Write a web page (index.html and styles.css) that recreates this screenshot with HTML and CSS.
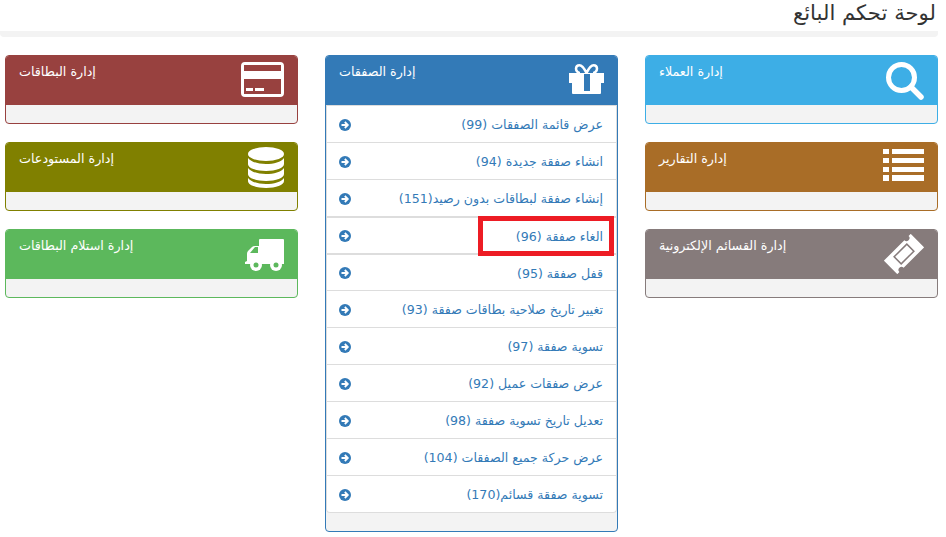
FILE: index.html
```html
<!DOCTYPE html>
<html lang="ar">
<head>
  <meta charset="UTF-8" />
  <title>لوحة تحكم البائع</title>
  <link rel="stylesheet" href="styles.css">
</head>
<body>
  <header class="page-header">
    <h1>لوحة تحكم البائع</h1>
  </header>

  <main class="columns">
    <section class="column">
      <div class="panel panel-cards">
        <div class="panel-heading">
          <span class="panel-title">إدارة البطاقات</span>
          <svg class="panel-icon icon-card" viewBox="0 0 43 35"><path fill="#fff" fill-rule="evenodd" d="M4 0h35a4 4 0 0 1 4 4v27a4 4 0 0 1-4 4H4a4 4 0 0 1-4-4V4a4 4 0 0 1 4-4zM3 3v6h37V3zm0 14v15h37V17z"/><path fill="#fff" d="M5 26h7v3H5zm9 0h9v3h-9z"/></svg>
        </div>
        <div class="panel-footer"></div>
      </div>
      <div class="panel panel-stores">
        <div class="panel-heading">
          <span class="panel-title">إدارة المستودعات</span>
          <svg class="panel-icon icon-stack" viewBox="0 0 36 41"><g fill="#fff"><ellipse cx="18" cy="7" rx="18" ry="7"/><path d="M0 11c3 4 10 6 18 6s15-2 18-6v6c0 4-8 7-18 7S0 21 0 17z"/><path d="M0 21c3 4 10 6 18 6s15-2 18-6v6c0 4-8 7-18 7S0 31 0 27z"/><path d="M0 31c3 4 10 6 18 6s15-2 18-6v3c0 4-8 7-18 7S0 38 0 34z"/></g></svg>
        </div>
        <div class="panel-footer"></div>
      </div>
      <div class="panel panel-receive">
        <div class="panel-heading">
          <span class="panel-title">إدارة استلام البطاقات</span>
          <svg class="panel-icon icon-truck" viewBox="0 0 39 32"><path fill="#fff" fill-rule="evenodd" d="M15 0h23a1 1 0 0 1 1 1v24H0v-2l2-1v-7q0-2 1-3l4-4q1-1 3-1h4V1a1 1 0 0 1 1-1zM5 14h8V8h-3z"/><circle cx="11" cy="26" r="6" fill="#fff"/><circle cx="31" cy="26" r="6" fill="#fff"/><circle cx="11" cy="26" r="2.500" fill="#5cb85c"/><circle cx="31" cy="26" r="2.500" fill="#5cb85c"/></svg>
        </div>
        <div class="panel-footer"></div>
      </div>
    </section>

    <section class="column">
      <div class="panel panel-deals">
        <div class="panel-heading">
          <span class="panel-title">إدارة الصفقات</span>
          <svg class="panel-icon icon-gift" viewBox="0 0 35 30"><path fill="#fff" fill-rule="evenodd" d="M0 9h35v10h-3v10a1 1 0 0 1-1 1H4a1 1 0 0 1-1-1V19H0zm15 1v17h6V10z"/><path fill="none" stroke="#fff" stroke-width="2.500" d="M17.500 9C15 4 12.500 1.300 10.500 1.300 8 1.300 7 3 7 4.800 7 7 9 9 11 9m6.500 0C20 4 22.500 1.300 24.500 1.300 27 1.300 28 3 28 4.800 28 7 26 9 24 9"/></svg>
        </div>
        <ul class="menu">
          <li><a href="#">عرض قائمة الصفقات (99)</a><svg class="arrow" viewBox="0 0 12 12"><circle cx="6" cy="6" r="6" fill="#337ab7"/><path d="M2.500 6h6M5.800 3l3 3-3 3" fill="none" stroke="#fff" stroke-width="1.800"/></svg></li>
          <li><a href="#">انشاء صفقة جديدة (94)</a><svg class="arrow" viewBox="0 0 12 12"><circle cx="6" cy="6" r="6" fill="#337ab7"/><path d="M2.500 6h6M5.800 3l3 3-3 3" fill="none" stroke="#fff" stroke-width="1.800"/></svg></li>
          <li><a href="#">إنشاء صفقة لبطاقات بدون رصيد(151)</a><svg class="arrow" viewBox="0 0 12 12"><circle cx="6" cy="6" r="6" fill="#337ab7"/><path d="M2.500 6h6M5.800 3l3 3-3 3" fill="none" stroke="#fff" stroke-width="1.800"/></svg></li>
          <li class="marked"><a href="#">الغاء صفقة (96)</a><svg class="arrow" viewBox="0 0 12 12"><circle cx="6" cy="6" r="6" fill="#337ab7"/><path d="M2.500 6h6M5.800 3l3 3-3 3" fill="none" stroke="#fff" stroke-width="1.800"/></svg></li>
          <li><a href="#">قفل صفقة (95)</a><svg class="arrow" viewBox="0 0 12 12"><circle cx="6" cy="6" r="6" fill="#337ab7"/><path d="M2.500 6h6M5.800 3l3 3-3 3" fill="none" stroke="#fff" stroke-width="1.800"/></svg></li>
          <li><a href="#">تغيير تاريخ صلاحية بطاقات صفقة (93)</a><svg class="arrow" viewBox="0 0 12 12"><circle cx="6" cy="6" r="6" fill="#337ab7"/><path d="M2.500 6h6M5.800 3l3 3-3 3" fill="none" stroke="#fff" stroke-width="1.800"/></svg></li>
          <li><a href="#">تسوية صفقة (97)</a><svg class="arrow" viewBox="0 0 12 12"><circle cx="6" cy="6" r="6" fill="#337ab7"/><path d="M2.500 6h6M5.800 3l3 3-3 3" fill="none" stroke="#fff" stroke-width="1.800"/></svg></li>
          <li><a href="#">عرض صفقات عميل (92)</a><svg class="arrow" viewBox="0 0 12 12"><circle cx="6" cy="6" r="6" fill="#337ab7"/><path d="M2.500 6h6M5.800 3l3 3-3 3" fill="none" stroke="#fff" stroke-width="1.800"/></svg></li>
          <li><a href="#">تعديل تاريخ تسوية صفقة (98)</a><svg class="arrow" viewBox="0 0 12 12"><circle cx="6" cy="6" r="6" fill="#337ab7"/><path d="M2.500 6h6M5.800 3l3 3-3 3" fill="none" stroke="#fff" stroke-width="1.800"/></svg></li>
          <li><a href="#">عرض حركة جميع الصفقات (104)</a><svg class="arrow" viewBox="0 0 12 12"><circle cx="6" cy="6" r="6" fill="#337ab7"/><path d="M2.500 6h6M5.800 3l3 3-3 3" fill="none" stroke="#fff" stroke-width="1.800"/></svg></li>
          <li><a href="#">تسوية صفقة قسائم(170)</a><svg class="arrow" viewBox="0 0 12 12"><circle cx="6" cy="6" r="6" fill="#337ab7"/><path d="M2.500 6h6M5.800 3l3 3-3 3" fill="none" stroke="#fff" stroke-width="1.800"/></svg></li>
        </ul>
        <div class="panel-footer"></div>
      </div>
    </section>

    <section class="column">
      <div class="panel panel-clients">
        <div class="panel-heading">
          <span class="panel-title">إدارة العملاء</span>
          <svg class="panel-icon icon-search" viewBox="0 0 38 38"><circle cx="15.500" cy="15.500" r="13" fill="none" stroke="#fff" stroke-width="5"/><path d="M25 25l10 10" stroke="#fff" stroke-width="5.500" stroke-linecap="round"/></svg>
        </div>
        <div class="panel-footer"></div>
      </div>
      <div class="panel panel-reports">
        <div class="panel-heading">
          <span class="panel-title">إدارة التقارير</span>
          <svg class="panel-icon icon-list" viewBox="0 0 41 32"><path fill="#fff" d="M0 0h6v5H0zm9 0h32v5H9zM0 9h6v5H0zm9 0h32v5H9zM0 18h6v5H0zm9 0h32v5H9zM0 26h6v6H0zm9 0h32v6H9z"/></svg>
        </div>
        <div class="panel-footer"></div>
      </div>
      <div class="panel panel-vouchers">
        <div class="panel-heading">
          <span class="panel-title">إدارة القسائم الإلكترونية</span>
          <svg class="panel-icon icon-ticket" viewBox="0 0 40 40"><g transform="rotate(-45 20 20)"><path fill="#fff" d="M1 10.500H30a3 3 0 0 0 6 0H39V29.500H10a3 3 0 0 0-6 0H1z"/><rect x="11" y="15" width="18" height="10" fill="#fff" stroke="#867b7b" stroke-width="1.500"/></g></svg>
        </div>
        <div class="panel-footer"></div>
      </div>
    </section>
  </main>
</body>
</html>
```

FILE: styles.css
```css
* {
  box-sizing: border-box;
}

body {
  margin: 0;
  background: #fff;
  color: #333;
  font-family: "DejaVu Sans", "Noto Sans", sans-serif;
  font-size: 12.7px;
}

.page-header {
  height: 37px;
  width: 938px;
  border-bottom: 6px solid #f3f3f3;
  border-radius: 0 0 4px 4px;
  direction: rtl;
}

.page-header h1 {
  margin: 0;
  padding-right: 2px;
  font-size: 21.2px;
  font-weight: 400;
  line-height: 26px;
}

.columns {
  display: grid;
  grid-template-columns: repeat(3, 293px);
  column-gap: 27px;
  padding: 18px 0 0 5px;
}

.panel {
  margin-bottom: 18px;
  border: 1px solid var(--tone);
  border-radius: 4px;
  background: #f3f3f3;
  overflow: hidden;
}

.panel-cards { --tone: #98413f; }
.panel-stores { --tone: #808000; }
.panel-receive { --tone: #5cb85c; }
.panel-deals { --tone: #337ab7; }
.panel-clients { --tone: #3daee6; }
.panel-reports { --tone: #a96d27; }
.panel-vouchers { --tone: #867b7b; }

.panel-heading {
  display: flex;
  justify-content: space-between;
  align-items: flex-start;
  height: 49px;
  padding: 0 13px;
  background: var(--tone);
  color: #fff;
}

.panel-title {
  margin-top: 7px;
  direction: rtl;
  line-height: 17px;
}

.panel-icon {
  flex: none;
}

.icon-card { width: 43px; height: 35px; margin-top: 6px; }
.icon-stack { width: 36px; height: 41px; margin-top: 4px; }
.icon-truck { width: 39px; height: 32px; margin-top: 9px; }
.icon-gift { width: 35px; height: 30px; margin-top: 8px; }
.icon-search { width: 38px; height: 38px; margin-top: 6px; }
.icon-list { width: 41px; height: 32px; margin-top: 6px; }
.icon-ticket { width: 40px; height: 40px; margin-top: 4px; }

.panel-footer {
  height: 18px;
}

.menu {
  list-style: none;
  margin: 0;
  padding: 0;
  background: #fff;
  border: 1px solid #ddd;
  border-top: 0;
  border-radius: 0 0 4px 4px;
}

.menu li {
  position: relative;
  display: flex;
  justify-content: space-between;
  align-items: center;
  height: 37px;
  padding: 1px 13px 0;
  border-top: 1px solid #ddd;
  direction: rtl;
}

.menu .marked,
.menu .marked + li {
  border-top-width: 2px;
}

.menu a {
  color: #337ab7;
  font-size: 12.6px;
  text-decoration: none;
}

.arrow {
  flex: none;
  width: 12px;
  height: 12px;
  margin-left: -1px;
}

.marked::after {
  content: "";
  box-sizing: border-box;
  position: absolute;
  top: -2px;
  right: 2px;
  z-index: 1;
  width: 136px;
  height: 40px;
  border: 5px solid #ed1c24;
}
```
